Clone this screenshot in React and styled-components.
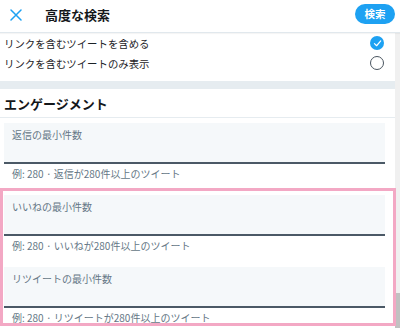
import React from "react";
import styled, { createGlobalStyle } from "styled-components";

const Global = createGlobalStyle`
  html, body { margin: 0; padding: 0; background: #fff; }
  body { font-family: "Noto Sans CJK JP", "Noto Sans", sans-serif; overflow: hidden; }
  * { box-sizing: border-box; }
`;

const Page = styled.div`
  width: 400px;
  height: 328px;
  display: flex;
  flex-direction: column;
  background: #fff;
  color: #14171a;
`;

const Header = styled.header`
  height: 33px;
  flex: none;
  display: flex;
  align-items: center;
  padding: 0 5px 3px 10px;
  border-bottom: 1px solid #e1e8ed;
  box-shadow: 0 1px 1px rgba(0, 0, 0, 0.04);
  position: relative;
  z-index: 1;
`;

const CloseButton = styled.button`
  width: 12px;
  height: 12px;
  padding: 0;
  border: 0;
  background: none;
  display: flex;
  color: #1da1f2;
`;

const Title = styled.h1`
  margin: 0 0 0 23px;
  font-size: 13px;
  font-weight: 700;
  flex: 1;
  line-height: 16px;
`;

const SearchButton = styled.button`
  width: 40px;
  height: 20px;
  border: 0;
  border-radius: 10px;
  background: #1da1f2;
  color: #fff;
  font-family: inherit;
  font-size: 10.5px;
  font-weight: 700;
  padding: 0;
  margin-bottom: 2px;
`;

const Body = styled.div`
  flex: 1;
  display: flex;
  position: relative;
  min-height: 0;
`;

const Content = styled.main`
  flex: 1;
  overflow: hidden;
  display: flex;
  flex-direction: column;
`;

const Options = styled.div`
  padding-bottom: 8px;
`;

const OptionRow = styled.label`
  height: 20px;
  display: flex;
  align-items: center;
  justify-content: space-between;
  padding: 0 10px 0 4px;
  font-size: 10.4px;
  color: #1c2226;
`;

const Radio = styled.span`
  width: 14px;
  height: 14px;
  border-radius: 50%;
  display: flex;
  align-items: center;
  justify-content: center;
  margin-right: 1px;
  background: ${(p) => (p.$checked ? "#1da1f2" : "#fff")};
  border: ${(p) => (p.$checked ? "none" : "1.5px solid #4a555f")};
`;

const Band = styled.div`
  height: 8px;
  background: #e6ecf0;
  flex: none;
`;

const SectionTitle = styled.h2`
  margin: 0;
  height: 29px;
  display: flex;
  align-items: center;
  padding-left: 4px;
  font-size: 13px;
  font-weight: 700;
  border-bottom: 1px solid #e6ecf0;
  flex: none;
`;

const Fields = styled.div`
  padding: 5px 10px 0 4px;
`;

const Field = styled.div`
  margin-bottom: 15px;
`;

const InputBox = styled.div`
  height: 41px;
  background: #f5f8fa;
  border-bottom: 2px solid #4b5966;
  padding: 6px 8px 0;
`;

const Label = styled.div`
  font-size: 10px;
  line-height: 12px;
  color: #657786;
`;

const Helper = styled.div`
  margin-top: 4px;
  padding-left: 8px;
  font-size: 10px;
  line-height: 12px;
  color: #657786;
  white-space: nowrap;
`;

const Scrollbar = styled.div`
  width: 5px;
  flex: none;
  background: #f0f0f0;
  display: flex;
  flex-direction: column;
  justify-content: flex-end;
`;

const Thumb = styled.div`
  height: 35px;
  background: #c1c1c1;
`;

const Highlight = styled.div`
  position: absolute;
  left: 0;
  top: 155px;
  width: 396px;
  height: 138px;
  border: 3px solid #f3a8c4;
  pointer-events: none;
`;

const Check = () => (
  <svg width="9" height="9" viewBox="0 0 10 10">
    <path d="M1.6 5.2 L4 7.5 L8.6 2.2" fill="none" stroke="#fff" strokeWidth="1.3" strokeLinecap="round" strokeLinejoin="round" />
  </svg>
);

const fields = [
  { label: "返信の最小件数", help: "例: 280 · 返信が280件以上のツイート" },
  { label: "いいねの最小件数", help: "例: 280 · いいねが280件以上のツイート" },
  { label: "リツイートの最小件数", help: "例: 280 · リツイートが280件以上のツイート" },
];

export default function App() {
  return (
    <>
      <Global />
      <Page>
        <Header>
          <CloseButton aria-label="閉じる">
            <svg width="12" height="12" viewBox="0 0 12 12">
              <path d="M1 1 L11 11 M11 1 L1 11" stroke="#1da1f2" strokeWidth="1.5" strokeLinecap="round" />
            </svg>
          </CloseButton>
          <Title>高度な検索</Title>
          <SearchButton>検索</SearchButton>
        </Header>
        <Body>
          <Content>
            <Options>
              <OptionRow>
                リンクを含むツイートを含める
                <Radio $checked>
                  <Check />
                </Radio>
              </OptionRow>
              <OptionRow>
                リンクを含むツイートのみ表示
                <Radio />
              </OptionRow>
            </Options>
            <Band />
            <SectionTitle>エンゲージメント</SectionTitle>
            <Fields>
              {fields.map((f) => (
                <Field key={f.label}>
                  <InputBox>
                    <Label>{f.label}</Label>
                  </InputBox>
                  <Helper>{f.help}</Helper>
                </Field>
              ))}
            </Fields>
          </Content>
          <Scrollbar>
            <Thumb />
          </Scrollbar>
          <Highlight />
        </Body>
      </Page>
    </>
  );
}
